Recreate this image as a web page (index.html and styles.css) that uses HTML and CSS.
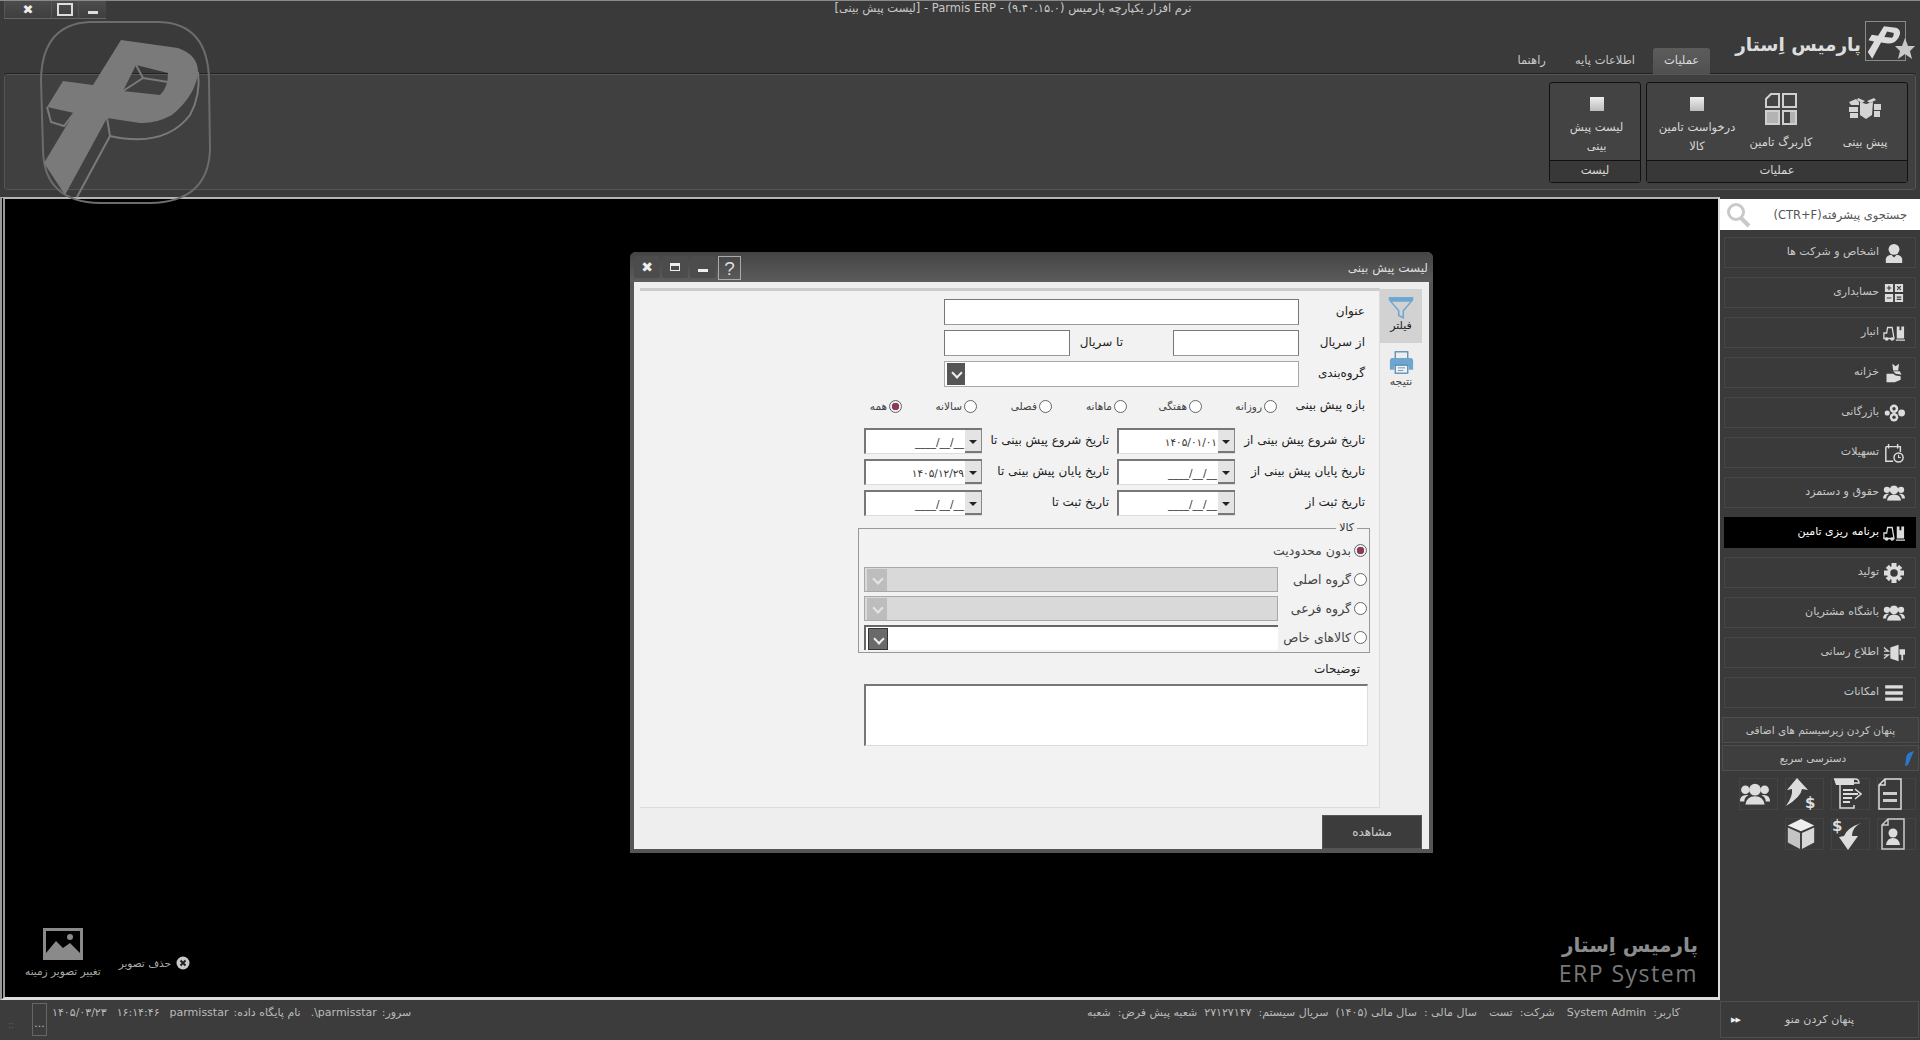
FILE: index.html
```html
<!DOCTYPE html>
<html lang="fa" dir="rtl">
<head>
    <meta charset="UTF-8">
    <title>Parmis ERP</title>
    <link rel="stylesheet" href="styles.css">
</head>
<body>
    <!-- نمادهای مشترک -->
    <svg class="symbols" xmlns="http://www.w3.org/2000/svg">
        <symbol id="p-mark" viewBox="40 20 172 186">
            <path fill-rule="evenodd" d="M121 40 L178 48 Q198 55 198 72 Q196 95 172 115 Q155 124 140 123 L107 118 L65 195 L44 163 L74 113 L47 107 L63 81 L93 85 Z M136 65 L123 91 L160 95 Q168 88 168 73 Z"/>
        </symbol>
        <symbol id="i-people" viewBox="0 0 28 20">
            <circle cx="5" cy="6" r="4"/><circle cx="23" cy="6" r="4"/>
            <path d="M0 17 Q0 11 6 11 L8 11 Q4 13 4 17Z M28 17 Q28 11 22 11 L20 11 Q24 13 24 17Z"/>
            <circle cx="14" cy="6" r="5.5"/>
            <path d="M5 20 Q6 12 14 12 Q22 12 23 20Z"/>
        </symbol>
        <symbol id="i-lift" viewBox="0 0 24 18">
            <path d="M1 15 V9 H4 L5 3 H10 L12 15 Z" fill="none" stroke="currentColor" stroke-width="1.4"/>
            <circle cx="4" cy="15.5" r="2"/><circle cx="10" cy="15.5" r="2"/>
            <path d="M14 16 H24 V17.5 H14Z"/>
            <path d="M15 2 H23 V15 H15Z M18 2 V6 H20 V2Z" fill-rule="evenodd"/>
        </symbol>
    </svg>

    <div class="top">
        <div class="titlebar">
            <div class="win-buttons">
                <span class="win-btn win-min"></span>
                <span class="win-btn win-max"></span>
                <span class="win-btn win-close">&#10006;</span>
            </div>
            <div class="win-title">نرم افزار یکپارچه پارمیس (۹.۴۰.۱۵.۰) - Parmis ERP - [لیست پیش بینی]</div>
        </div>

        <div class="tabs-row">
            <div class="brand">
                <svg class="brand-mark" viewBox="0 0 50 42">
                    <rect x="0.5" y="0.5" width="40" height="39" fill="none" stroke="#8a8a8a"/>
                    <use href="#p-mark" x="1" y="1" width="38" height="39" fill="#dcdcdc"/>
                    <path d="M40 17 L43 25 L50 25 L45 30 L47 38 L40 33 L33 38 L35 30 L30 25 L37 25Z" fill="#c8c8c8"/>
                </svg>
                <span class="brand-name">پارمیس اِستار</span>
            </div>
            <a class="tab active" href="#">عملیات</a>
            <a class="tab" href="#">اطلاعات پایه</a>
            <a class="tab" href="#">راهنما</a>
        </div>

        <div class="ribbon">
            <div class="ribbon-group group-wide">
                <div class="ribbon-body">
                    <div class="ribbon-item">
                        <svg class="ribbon-icon" width="34" height="32" viewBox="0 0 34 32">
                            <g fill="#d4d4d4">
                                <path d="M1 9 L8 6 L11 9 L11 12 L3 12Z M1 14 H10 V19 H1Z M2 20 H10 V25 H2Z"/>
                                <path d="M12 9 L18 11 L25 9 L24 22 L18 26 L12 22Z"/>
                                <path d="M10 5 L17 8 L14 10 L9 7Z M26 5 L19 8 L22 10 L28 7Z"/>
                                <path d="M26 11 H33 V17 H26Z M26 18 H32 V24 H26Z"/>
                            </g>
                        </svg>
                        <span>پیش بینی</span>
                    </div>
                    <div class="ribbon-item">
                        <svg class="ribbon-icon" width="34" height="32" viewBox="0 0 32 32">
                            <g fill="none" stroke="#cfcfcf" stroke-width="2">
                                <path d="M6 1 H14 V14 H1 V6 Z"/>
                                <rect x="18" y="1" width="13" height="13"/>
                                <rect x="1" y="18" width="13" height="13"/>
                                <rect x="18" y="18" width="13" height="13"/>
                            </g>
                            <path d="M1 19 H14 V31 H1Z M25 18 H31 V31 H25Z" fill="#cfcfcf" opacity=".8"/>
                        </svg>
                        <span>کاربرگ تامین</span>
                    </div>
                    <div class="ribbon-item two-line">
                        <span class="ribbon-square"></span>
                        <span>درخواست تامین<br>کالا</span>
                    </div>
                </div>
                <div class="ribbon-foot">عملیات</div>
            </div>
            <div class="ribbon-group group-narrow">
                <div class="ribbon-body">
                    <div class="ribbon-item two-line">
                        <span class="ribbon-square"></span>
                        <span>لیست پیش<br>بینی</span>
                    </div>
                </div>
                <div class="ribbon-foot">لیست</div>
            </div>
        </div>

        <!-- لوگوی کمرنگ روی نوار -->
        <svg class="ghost-logo" viewBox="40 20 172 186">
            <path d="M90 22 H160 Q208 24 209 80 L210 150 Q208 202 150 203 H100 Q44 202 43 150 L41 80 Q42 24 90 22Z" fill="none" stroke="#6c6c6c" stroke-width="2"/>
            <use href="#p-mark" x="40" y="20" width="172" height="186" fill="#7a7a7a"/>
            <path d="M198 72 Q201 95 190 115 Q165 148 110 136 L107 118 M110 136 L77 197 M47 107 L51 122 L64 126 L74 113 M136 65 L143 78 L123 91 M143 78 L168 82" fill="none" stroke="#7a7a7a" stroke-width="2"/>
        </svg>
    </div>

    <div class="workspace">
        <aside class="sidebar">
            <div class="search">
                <span class="search-text">جستجوی پیشرفته(CTR+F)</span>
                <svg width="26" height="26" viewBox="0 0 26 26">
                    <circle cx="10" cy="10" r="7.5" fill="none" stroke="#c9c9c9" stroke-width="3"/>
                    <path d="M15 16 L23 24" stroke="#c9c9c9" stroke-width="4"/>
                </svg>
            </div>

            <a class="side-item" href="#">
                <svg class="side-icon" viewBox="0 0 22 22"><circle cx="11" cy="7" r="6"/><path d="M2 22 V17 Q3 14 8 13 L11 16 L14 13 Q19 14 20 17 V22Z"/></svg>
                اشخاص و شرکت ها
            </a>
            <a class="side-item" href="#">
                <svg class="side-icon" viewBox="0 0 22 22">
                    <path d="M1 1 H10 V10 H1Z M12 1 H21 V10 H12Z M1 12 H10 V21 H1Z M12 12 H21 V21 H12Z"/>
                    <path d="M3 5.5 H8 M5.5 3 V8 M14.5 3.5 L18.5 7.5 M18.5 3.5 L14.5 7.5 M3 16.5 H8 M14 15.5 H19 M14 18 H19" stroke="#3a3a3a" stroke-width="1.3"/>
                </svg>
                حسابداری
            </a>
            <a class="side-item" href="#">
                <svg class="side-icon" viewBox="0 0 24 18"><use href="#i-lift"/></svg>
                انبار
            </a>
            <a class="side-item" href="#">
                <svg class="side-icon" viewBox="0 0 22 24">
                    <path d="M9 1 L13 4 L17 1 L16 9 H10Z"/>
                    <path d="M10 10 H18 L20 14 L13 13Z"/>
                    <path d="M2 13 H10 L13 15 L19 16 V20 L12 23 H2Z"/>
                </svg>
                خزانه
            </a>
            <a class="side-item" href="#">
                <svg class="side-icon" viewBox="0 0 26 22">
                    <circle cx="13" cy="6" r="5"/><circle cx="13" cy="16" r="5"/>
                    <circle cx="22" cy="11" r="4"/><circle cx="5" cy="11" r="3"/>
                    <circle cx="13" cy="6" r="2" fill="#3a3a3a"/><circle cx="13" cy="16" r="2" fill="#3a3a3a"/>
                </svg>
                بازرگانی
            </a>
            <a class="side-item" href="#">
                <svg class="side-icon" viewBox="0 0 22 22">
                    <path d="M2 4 H18 V10 M2 4 V20 H10 M2 4" fill="none" stroke="currentColor" stroke-width="1.6"/>
                    <path d="M5 1 V6 M15 1 V6" stroke="currentColor" stroke-width="1.6"/>
                    <circle cx="16" cy="16" r="5" fill="none" stroke="currentColor" stroke-width="1.6"/>
                    <path d="M16 13 V16 H18.5" fill="none" stroke="currentColor" stroke-width="1.2"/>
                </svg>
                تسهیلات
            </a>
            <a class="side-item" href="#">
                <svg class="side-icon" viewBox="0 0 28 20"><use href="#i-people"/></svg>
                حقوق و دستمزد
            </a>
            <a class="side-item selected" href="#">
                <svg class="side-icon" viewBox="0 0 24 18"><use href="#i-lift"/></svg>
                برنامه ریزی تامین
            </a>
            <a class="side-item" href="#">
                <svg class="side-icon" viewBox="0 0 24 24">
                    <circle cx="12" cy="12" r="6.5" fill="none" stroke="currentColor" stroke-width="4"/>
                    <path d="M9 0 H15 V6 H9Z M9 18 H15 V24 H9Z M0 9 H6 V15 H0Z M18 9 H24 V15 H18Z M2 6 L6 2 L9 6 L6 9Z M18 2 L22 6 L18 9 L15 6Z M2 18 L6 15 L9 18 L6 22Z M22 18 L18 22 L15 18 L18 15Z"/>
                </svg>
                تولید
            </a>
            <a class="side-item" href="#">
                <svg class="side-icon" viewBox="0 0 28 20"><use href="#i-people"/></svg>
                باشگاه مشتریان
            </a>
            <a class="side-item" href="#">
                <svg class="side-icon" viewBox="0 0 24 18">
                    <path d="M8 3 L17 0 V18 L8 15Z M18 5 H24 V11 H22 V17 H20 V11 H18Z"/>
                    <path d="M1 3 L6 7 L1 7 M1 15 L6 11 L1 11" fill="none" stroke="currentColor" stroke-width="1.3"/>
                </svg>
                اطلاع رسانی
            </a>
            <a class="side-item" href="#">
                <svg class="side-icon" viewBox="0 0 20 16"><path d="M2 1 H18 V4 H2Z M2 6.5 H18 V9.5 H2Z M2 12 H18 V15 H2Z"/></svg>
                امکانات
            </a>

            <div class="side-bar-btn">پنهان کردن زیرسیستم های اضافی</div>
            <div class="side-bar-btn quick-title">
                دسترسی سریع
                <svg class="feather" width="9" height="15" viewBox="0 0 9 15"><path d="M9 0 Q1 1 1 8 L0 15 L3 14 Q5 9 9 0Z" fill="#2a78c8"/></svg>
            </div>

            <div class="quick-grid">
                <div class="quick-box">
                    <svg width="24" height="32" viewBox="0 0 24 32">
                        <path d="M7 1 H23 V31 H1 V7Z M7 1 V7 H1" fill="none" stroke="#ddd" stroke-width="1.5"/>
                        <path d="M5 14 H19 V17 H5Z M5 21 H19 V24 H5Z" fill="#ccc"/>
                    </svg>
                </div>
                <div class="quick-box">
                    <svg width="30" height="32" viewBox="0 0 30 32">
                        <path d="M2 1 H23 Q27 1 27 5 H8 V30 H22 V27" fill="none" stroke="#ddd" stroke-width="1.5"/>
                        <path d="M2 1 H22 V7 H4Z" fill="#ddd"/>
                        <path d="M11 11 H21 V13 H11Z M11 15 H26 V17 H11Z M11 19 H20 V21 H11Z M11 23 H18 V25 H11Z" fill="#ddd"/>
                        <path d="M23 11 L29 16 L23 21" fill="none" stroke="#ddd" stroke-width="1.5"/>
                    </svg>
                </div>
                <div class="quick-box">
                    <svg width="30" height="32" viewBox="0 0 30 32">
                        <path d="M11 0 L22 12 L16 11 Q15 19 0 28 Q7 18 6 11 L1 12Z" fill="#ddd"/>
                        <text x="19" y="30" class="dollar">$</text>
                    </svg>
                </div>
                <div class="quick-box">
                    <svg width="30" height="22" viewBox="0 0 28 20" fill="#ddd"><use href="#i-people"/></svg>
                </div>
                <div class="quick-box quick-inset">
                    <svg width="24" height="32" viewBox="0 0 24 32">
                        <path d="M7 1 H23 V31 H1 V7Z M7 1 V7 H1" fill="none" stroke="#ccc" stroke-width="1.5"/>
                        <circle cx="12" cy="15" r="4.5" fill="#ddd"/>
                        <path d="M5 27 Q6 20 12 20 Q18 20 19 27Z" fill="#ddd"/>
                    </svg>
                </div>
                <div class="quick-box">
                    <svg width="30" height="32" viewBox="0 0 30 32">
                        <text x="0" y="13" class="dollar">$</text>
                        <path d="M29 5 Q20 9 20 18 L26 18 L16 32 L7 19 L12 18 Q15 10 29 5Z" fill="#ddd"/>
                    </svg>
                </div>
                <div class="quick-box">
                    <svg width="30" height="32" viewBox="0 0 30 34">
                        <path d="M15 1 L29 8 L15 14 L1 8Z" fill="#eee"/>
                        <path d="M1 10 L14 16 V33 L1 26Z" fill="#c4c4c4"/>
                        <path d="M29 10 L16 16 V33 L29 26Z" fill="#d8d8d8"/>
                    </svg>
                </div>
                <div class="quick-box empty"></div>
            </div>

            <div class="hide-menu">
                <span>پنهان کردن منو</span>
                <span class="hide-arrows">&#9654;&#9654;</span>
            </div>
        </aside>

        <div class="left-col">
            <main class="desktop">
                <!-- پنجره لیست پیش بینی -->
                <section class="dialog">
                    <div class="dialog-title">
                        <span>لیست پیش بینی</span>
                        <div class="dialog-buttons">
                            <span class="dlg-help">?</span>
                            <span class="dlg-btn"><i class="dlg-min"></i></span>
                            <span class="dlg-btn"><i class="dlg-max"></i></span>
                            <span class="dlg-btn dlg-close">&#10006;</span>
                        </div>
                    </div>

                    <div class="dialog-main">
                        <div class="side-tabs">
                            <div class="side-tab active">
                                <svg width="26" height="24" viewBox="0 0 34 30">
                                    <path d="M1 2 H33 V6 H1Z" fill="#6da7cf"/>
                                    <path d="M3 7 H31 L20 20 V29 L14 26 V20Z" fill="none" stroke="#6da7cf" stroke-width="2"/>
                                </svg>
                                فیلتر
                            </div>
                            <div class="side-tab">
                                <svg width="25" height="25" viewBox="0 0 28 28">
                                    <rect x="7" y="2" width="14" height="8" fill="none" stroke="#5a8fb4" stroke-width="1.5"/>
                                    <path d="M1 12 Q1 9 4 9 H24 Q27 9 27 12 V22 H22 V18 H6 V22 H1Z" fill="#6da7cf"/>
                                    <rect x="7" y="17" width="14" height="9" fill="#f2f2f2" stroke="#5a8fb4" stroke-width="1.5"/>
                                    <path d="M10 20 H18 M10 23 H16" stroke="#5a8fb4"/>
                                </svg>
                                نتیجه
                            </div>
                        </div>

                        <div class="panel">
                            <div class="row">
                                <label class="lbl lbl-main">عنوان</label>
                                <input class="field field-wide" type="text">
                            </div>
                            <div class="row">
                                <label class="lbl lbl-main">از سریال</label>
                                <input class="field field-short" type="text">
                                <label class="lbl lbl-serial">تا سریال</label>
                                <input class="field field-short" type="text">
                            </div>
                            <div class="row">
                                <label class="lbl lbl-main">گروه‌بندی</label>
                                <div class="combo field-wide"><span class="combo-btn"></span></div>
                            </div>

                            <div class="row row-period">
                                <label class="lbl lbl-period">بازه پیش بینی</label>
                                <label class="radio-item"><input type="radio" name="period">روزانه</label>
                                <label class="radio-item"><input type="radio" name="period">هفتگی</label>
                                <label class="radio-item"><input type="radio" name="period">ماهانه</label>
                                <label class="radio-item"><input type="radio" name="period">فصلی</label>
                                <label class="radio-item"><input type="radio" name="period">سالانه</label>
                                <label class="radio-item"><input type="radio" name="period" checked>همه</label>
                            </div>

                            <div class="row row-date-first">
                                <label class="lbl lbl-date">تاریخ شروع پیش بینی از</label>
                                <div class="date"><span class="date-btn"></span><span class="date-val">۱۴۰۵/۰۱/۰۱</span></div>
                                <label class="lbl lbl-date-to">تاریخ شروع پیش بینی تا</label>
                                <div class="date"><span class="date-btn"></span><span class="date-val">____/__/__</span></div>
                            </div>
                            <div class="row">
                                <label class="lbl lbl-date">تاریخ پایان پیش بینی از</label>
                                <div class="date"><span class="date-btn"></span><span class="date-val">____/__/__</span></div>
                                <label class="lbl lbl-date-to">تاریخ پایان پیش بینی تا</label>
                                <div class="date"><span class="date-btn"></span><span class="date-val">۱۴۰۵/۱۲/۲۹</span></div>
                            </div>
                            <div class="row">
                                <label class="lbl lbl-date">تاریخ ثبت از</label>
                                <div class="date"><span class="date-btn"></span><span class="date-val">____/__/__</span></div>
                                <label class="lbl lbl-date-to">تاریخ ثبت تا</label>
                                <div class="date"><span class="date-btn"></span><span class="date-val">____/__/__</span></div>
                            </div>

                            <fieldset class="goods">
                                <legend>کالا</legend>
                                <div class="goods-row goods-first">
                                    <label class="radio-item"><input type="radio" name="goods" checked>بدون محدودیت</label>
                                </div>
                                <div class="goods-row">
                                    <label class="radio-item"><input type="radio" name="goods">گروه اصلی</label>
                                    <div class="combo combo-off"><span class="combo-btn"></span></div>
                                </div>
                                <div class="goods-row">
                                    <label class="radio-item"><input type="radio" name="goods">گروه فرعی</label>
                                    <div class="combo combo-off"><span class="combo-btn"></span></div>
                                </div>
                                <div class="goods-row">
                                    <label class="radio-item"><input type="radio" name="goods">کالاهای خاص</label>
                                    <div class="combo combo-on"><span class="combo-btn"></span></div>
                                </div>
                            </fieldset>

                            <div class="notes-label">توضیحات</div>
                            <textarea class="notes"></textarea>
                        </div>
                    </div>

                    <div class="dialog-foot">
                        <button class="btn-view" type="button">مشاهده</button>
                    </div>
                </section>

                <div class="bg-tools">
                    <div class="bg-remove">
                        <svg width="14" height="14" viewBox="0 0 14 14">
                            <circle cx="7" cy="7" r="6.5" fill="#c8c8c8"/>
                            <path d="M4.5 4.5 L9.5 9.5 M9.5 4.5 L4.5 9.5" stroke="#222" stroke-width="2"/>
                        </svg>
                        حذف تصویر
                    </div>
                    <div class="bg-change">
                        <svg width="40" height="32" viewBox="0 0 40 32">
                            <path d="M0 0 H40 V32 H0Z M3 3 V25 L13 13 L20 20 L27 15 L37 25 V3Z" fill="#8a8a8a" fill-rule="evenodd"/>
                            <circle cx="27" cy="9" r="3" fill="#8a8a8a"/>
                            <path d="M3 29 L13 16 L19 23 L27 18 L37 29Z" fill="#8a8a8a"/>
                        </svg>
                        تغییر تصویر زمینه
                    </div>
                </div>

                <div class="watermark">
                    <div class="wm-name">پارمیس اِستار</div>
                    <div class="wm-erp" dir="ltr">ERP System</div>
                </div>
            </main>

            <footer class="statusbar">
                <div class="status-group status-right">
                    <span>کاربر:</span><span>System Admin</span>
                    <span class="sp">شرکت:</span><span>تست</span>
                    <span class="sp">سال مالی :</span><span>سال مالی (۱۴۰۵)</span>
                    <span>سریال سیستم:</span><span>۲۷۱۲۷۱۴۷</span>
                    <span>شعبه پیش فرض:</span><span>شعبه</span>
                </div>
                <div class="status-group status-left">
                    <span>سرور:</span><bdi dir="ltr">.\parmisstar</bdi>
                    <span class="sp">نام پایگاه داده:</span><span>parmisstar</span>
                    <span class="sp">۱۶:۱۴:۴۶</span>
                    <span class="sp">۱۴۰۵/۰۳/۲۳</span>
                    <span class="status-more">...</span>
                </div>
                <span class="grip">::</span>
            </footer>
        </div>
    </div>
</body>
</html>
```

FILE: styles.css
```css
* {
    box-sizing: border-box;
}

html, body {
    margin: 0;
    padding: 0;
    height: 1040px;
    overflow: hidden;
}

body {
    font-family: "DejaVu Sans", sans-serif;
    font-size: 12px;
    background-color: #3a3a3a;
    color: #ccc;
}

a {
    color: inherit;
    text-decoration: none;
}

.symbols {
    display: none;
}

/* نوار بالا */
.top {
    position: relative;
    height: 197px;
    border-top: 1px solid #8a8a8a;
}

.titlebar {
    display: flex;
    flex-direction: row-reverse;
    height: 18px;
}

.win-buttons {
    display: flex;
    flex-direction: row-reverse;
    width: 106px;
    height: 18px;
    direction: ltr;
    flex-shrink: 0;
}

.win-btn {
    display: flex;
    align-items: center;
    justify-content: center;
    height: 18px;
    background: linear-gradient(#4c4c4c, #3f3f3f);
    border-bottom: 1px solid #666;
    border-left: 1px solid #555;
    color: #eee;
    font-size: 13px;
}

.win-close {
    width: 47px;
}

.win-max {
    width: 27px;
}

.win-min {
    width: 28px;
}

.win-max::after {
    content: "";
    width: 12px;
    height: 9px;
    border: 2px solid #ddd;
}

.win-min::after {
    content: "";
    width: 10px;
    height: 3px;
    margin-top: 6px;
    background-color: #ddd;
}

.win-title {
    flex: 1;
    text-align: center;
    line-height: 15px;
    color: #c8c8c8;
    font-size: 11.5px;
    white-space: nowrap;
}

.tabs-row {
    display: flex;
    align-items: flex-end;
    height: 55px;
    padding-right: 5px;
}

.brand {
    display: flex;
    align-items: center;
    height: 48px;
    margin-bottom: 6px;
    margin-left: 25px;
    gap: 4px;
}

.brand-mark {
    width: 50px;
    height: 42px;
    margin-bottom: 4px;
}

.brand-name {
    font-size: 18.5px;
    font-weight: bold;
    color: #ddd;
    white-space: nowrap;
}

.tab {
    height: 26px;
    line-height: 24px;
    padding: 0 11px;
    margin-left: 7px;
    border-radius: 3px 3px 0 0;
    color: #c8c8c8;
    font-size: 11.5px;
}

.tab.active {
    background: linear-gradient(#5c5c5c, #505050);
    color: #ddd;
}

.ribbon {
    display: flex;
    gap: 5px;
    height: 116px;
    margin: 0 4px;
    padding: 7px 7px 6px;
    background-color: #404040;
    border: 1px solid #555;
    border-radius: 3px;
    box-shadow: 0 -1px 0 #222;
}

.ribbon-group {
    display: flex;
    flex-direction: column;
    height: 101px;
    background-color: #434343;
    border: 1px solid #111;
    border-radius: 3px;
}

.group-wide {
    width: 262px;
}

.group-narrow {
    width: 92px;
}

.group-wide .two-line {
    padding-left: 8px;
}

.group-narrow .two-line {
    padding-left: 3px;
}

.ribbon-body {
    display: flex;
    flex: 1;
}

.ribbon-item {
    flex: 1;
    display: flex;
    flex-direction: column;
    align-items: center;
    padding-top: 10px;
    text-align: center;
    color: #d8d8d8;
    font-size: 11.5px;
    line-height: 19px;
}

.ribbon-icon {
    margin-bottom: 8px;
}

.two-line {
    padding-top: 14px;
}

.ribbon-square {
    width: 14px;
    height: 14px;
    margin-bottom: 7px;
    background: linear-gradient(#eee, #bbb);
}

.ribbon-foot {
    height: 22px;
    line-height: 18px;
    text-align: center;
    background-color: #383838;
    border-top: 1px solid #111;
    color: #d8d8d8;
    font-size: 11.5px;
}

.ghost-logo {
    position: absolute;
    left: 40px;
    top: 19px;
    width: 172px;
    height: 186px;
    pointer-events: none;
    z-index: 2;
}

/* بدنه */
.workspace {
    display: flex;
    height: 843px;
}

.left-col {
    display: flex;
    flex-direction: column;
    flex: 1;
}

.sidebar {
    display: flex;
    flex-direction: column;
    width: 200px;
    padding-top: 2px;
    flex-shrink: 0;
}

.search {
    display: flex;
    align-items: center;
    justify-content: space-between;
    height: 31px;
    padding: 0 13px 0 6px;
    margin-bottom: 7px;
    background-color: #fff;
    color: #555;
    font-size: 11.5px;
}

.side-item {
    display: flex;
    align-items: center;
    gap: 4px;
    height: 31px;
    margin: 0 4px 9px;
    padding: 0 10px 2px 0;
    background-color: #3a3a3a;
    border: 1px solid #464646;
    color: #c8c8c8;
    font-size: 11px;
    white-space: nowrap;
}

.side-item.selected {
    background-color: #000;
    border-color: #000;
    color: #fff;
}

.side-icon {
    width: 22px;
    height: 20px;
    margin-top: 2px;
    fill: #dcdcdc;
    color: #dcdcdc;
    flex-shrink: 0;
}

.side-bar-btn {
    position: relative;
    height: 26px;
    line-height: 24px;
    margin: 0 1px 2px 2px;
    text-align: center;
    background-color: #3e3e3e;
    border: 1px solid #4e4e4e;
    color: #c8c8c8;
    font-size: 10.5px;
}

.quick-title {
    padding-right: 15px;
}

.feather {
    position: absolute;
    right: 4px;
    top: 5px;
}

.quick-grid {
    display: grid;
    grid-template-columns: repeat(4, 39px);
    grid-auto-rows: 32px;
    gap: 8px 7px;
    margin: 5px 4px 0 0;
}

.quick-box {
    display: flex;
    align-items: center;
    justify-content: flex-end;
    border: 1px solid #444;
}

.quick-inset {
    padding-left: 3px;
}

.quick-box.empty {
    border: none;
}

.dollar {
    direction: ltr;
    font-size: 15px;
    font-weight: bold;
    fill: #ddd;
}

.hide-menu {
    display: flex;
    align-items: center;
    justify-content: center;
    position: relative;
    height: 37px;
    margin: auto 1px 2px 0;
    border: 1px solid #4e4e4e;
    color: #c8c8c8;
    font-size: 11px;
}

.hide-arrows {
    position: absolute;
    left: 10px;
    font-size: 7px;
    letter-spacing: -1px;
    color: #eee;
}

/* ناحیه سیاه */
.desktop {
    position: relative;
    flex: 1;
    background-color: #000;
    border-top: 2px solid #b5b5b5;
    border-left: 5px double #999;
    border-right: 2px solid #ddd;
    border-bottom: 3px solid #ddd;
}

/* پنجره */
.dialog {
    position: absolute;
    left: 625px;
    top: 53px;
    width: 803px;
    height: 601px;
    display: flex;
    flex-direction: column;
    background-color: #eee;
    border: 4px solid #555;
    border-top: none;
    border-radius: 6px 6px 0 0;
    color: #222;
}

.dialog-title {
    display: flex;
    align-items: center;
    justify-content: space-between;
    height: 30px;
    margin: 0 -4px;
    padding: 2px 5px 0 4px;
    background: linear-gradient(#444, #5c5c5c);
    border-radius: 6px 6px 0 0;
    color: #ddd;
    font-size: 12px;
    flex-shrink: 0;
}

.dialog-buttons {
    display: flex;
    gap: 2px;
}

.dlg-btn {
    display: flex;
    align-items: center;
    justify-content: center;
    width: 26px;
    height: 22px;
    color: #eee;
    font-size: 14px;
    border-radius: 3px;
    background-color: #4c4c4c;
}

.dlg-max {
    display: block;
    width: 10px;
    height: 8px;
    border: 1px solid #eee;
    border-top-width: 3px;
}

.dlg-min {
    display: block;
    width: 10px;
    height: 3px;
    margin-top: 7px;
    background-color: #eee;
}

.dlg-help {
    width: 23px;
    height: 24px;
    text-align: center;
    line-height: 23px;
    border: 1px solid #aaa;
    color: #ddd;
    font-size: 19px;
    font-family: "Liberation Sans", sans-serif;
}

.dialog-main {
    display: flex;
    height: 526px;
    padding: 6px 7px 0 6px;
    flex-shrink: 0;
}

.side-tabs {
    width: 42px;
    flex-shrink: 0;
    margin-top: 1px;
}

.side-tab {
    display: flex;
    flex-direction: column;
    align-items: center;
    height: 54px;
    padding-top: 6px;
    margin-bottom: 1px;
    color: #444;
    font-size: 11px;
    line-height: 14px;
}

.side-tab.active {
    background-color: #d2d2d2;
    color: #222;
}

.panel {
    flex: 1;
    height: 520px;
    padding: 8px 9px 0 0;
    background-color: #f2f2f2;
    border-top: 3px solid #ccc;
    border-right: 1px solid #ddd;
    border-bottom: 1px solid #ddd;
}

.row {
    display: flex;
    align-items: center;
    height: 26px;
    margin-bottom: 5px;
    padding-right: 5px;
}

.row-period {
    margin-top: 6px;
    margin-bottom: 9px;
}

.lbl {
    padding-bottom: 3px;
    font-size: 12px;
    white-space: nowrap;
    color: #222;
}

.lbl-main {
    width: 66px;
}

.lbl-serial {
    width: 103px;
    padding-right: 50px;
}

.lbl-period {
    width: 88px;
}

.lbl-date {
    width: 130px;
}

.lbl-date-to {
    width: 135px;
    padding-right: 8px;
}

.field {
    height: 26px;
    padding: 0 4px;
    background-color: #fff;
    border: 1px solid #777;
    border-bottom-color: #999;
    outline: none;
}

.field-wide {
    width: 355px;
}

.field-short {
    width: 126px;
}

.combo {
    display: flex;
    align-items: center;
    height: 26px;
    padding: 0 2px;
    background-color: #fff;
    border: 1px solid #aaa;
}

.combo-btn {
    position: relative;
    width: 18px;
    height: 22px;
    margin-right: auto;
    background-color: #555;
}

.combo-btn::after {
    content: "";
    position: absolute;
    left: 6px;
    top: 6px;
    width: 6px;
    height: 6px;
    border-right: 2px solid #eee;
    border-bottom: 2px solid #eee;
    transform: rotate(45deg);
}

.combo-off {
    width: 414px;
    height: 25px;
    background-color: #d9d9d9;
    border-color: #a8a8a8;
}

.combo-off .combo-btn {
    width: 20px;
    background-color: #bdbdbd;
}

.combo-off .combo-btn::after {
    left: 7px;
    border-color: #e4e4e4;
}

.combo-on {
    width: 414px;
    height: 25px;
    border: none;
    border-top: 2px solid #666;
    border-left: 2px solid #666;
}

.combo-on .combo-btn {
    width: 20px;
    background-color: #6a6a6a;
    border: 1px solid #333;
}

.radio-item {
    display: flex;
    align-items: center;
    gap: 2px;
    width: 75px;
    font-size: 10.5px;
    color: #444;
    white-space: nowrap;
}

.radio-item input {
    appearance: none;
    width: 13px;
    height: 13px;
    margin: 0;
    background-color: #fff;
    border: 1px solid #666;
    border-radius: 50%;
    flex-shrink: 0;
}

.radio-item input:checked {
    background: radial-gradient(circle, #8a3a5a 0 3.5px, #eee 4px);
}

.date {
    display: flex;
    align-items: center;
    width: 118px;
    height: 26px;
    background-color: #fff;
    border-top: 2px solid #777;
    border-left: 2px solid #777;
    border-bottom: 1px solid #ddd;
}

.date-btn {
    position: relative;
    width: 17px;
    height: 100%;
    background-color: #e4e4e4;
    border-right: 1px solid #888;
    border-bottom: 2px solid #777;
    flex-shrink: 0;
}

.date-btn::after {
    content: "";
    position: absolute;
    left: 4px;
    top: 10px;
    border-left: 4px solid transparent;
    border-right: 4px solid transparent;
    border-top: 4px solid #222;
}

.date-val {
    padding-right: 1px;
    font-size: 10.5px;
    direction: ltr;
    color: #333;
}

.goods {
    width: 512px;
    height: 131px;
    margin: 6px 0 0;
    padding: 0 2px 0 4px;
    border: 1px solid #999;
    min-inline-size: auto;
}

.goods legend {
    margin-right: 10px;
    padding: 0 3px;
    font-size: 11px;
    line-height: 12px;
    color: #333;
}

.goods-row {
    display: flex;
    align-items: center;
    height: 25px;
    margin-bottom: 4px;
}

.goods-first {
    height: 20px;
    margin-top: 6px;
    margin-bottom: 7px;
}

.goods .radio-item {
    width: 89px;
    gap: 3px;
    flex-shrink: 0;
    font-size: 12.5px;
}

.notes-label {
    margin: 8px 10px 0 0;
    height: 23px;
    line-height: 16px;
    font-size: 12px;
    color: #222;
}

.notes {
    display: block;
    width: 504px;
    height: 62px;
    margin-right: 2px;
    background-color: #fff;
    border: 1px solid #ddd;
    border-top: 2px solid #777;
    border-left: 2px solid #777;
    resize: none;
    outline: none;
}

.dialog-foot {
    display: flex;
    padding: 7px 7px 0 0;
}

.btn-view {
    width: 100px;
    height: 34px;
    background-color: #3c3c3c;
    border: 1px solid #555;
    color: #ccc;
    font-family: inherit;
    font-size: 12px;
}

/* ابزار تصویر زمینه */
.bg-tools {
    position: absolute;
    left: 20px;
    bottom: 20px;
    display: flex;
    align-items: flex-end;
    gap: 18px;
    color: #aaa;
    font-size: 10.5px;
}

.bg-remove {
    display: flex;
    align-items: center;
    gap: 5px;
    margin-bottom: 7px;
}

.bg-change {
    display: flex;
    flex-direction: column;
    align-items: center;
    gap: 5px;
}

.watermark {
    position: absolute;
    right: 20px;
    bottom: 11px;
    text-align: right;
}

.wm-name {
    font-size: 20px;
    font-weight: bold;
    line-height: 30px;
    color: #8c8c8c;
    white-space: nowrap;
}

.wm-erp {
    font-family: "Open Sans", sans-serif;
    font-size: 23px;
    line-height: 26px;
    letter-spacing: 1.5px;
    color: #777;
}

/* نوار وضعیت */
.statusbar {
    position: relative;
    display: flex;
    justify-content: space-between;
    height: 40px;
    padding: 3px 40px 0 0;
    background-color: #3c3c3c;
    font-size: 11px;
    color: #bbb;
}

.status-group {
    display: flex;
    align-items: flex-start;
    line-height: 20px;
    white-space: nowrap;
}

.status-right {
    gap: 7px;
}

.status-left {
    gap: 5px;
    margin-left: 32px;
}

.sp {
    margin-right: 5px;
}

.status-more {
    width: 15px;
    height: 33px;
    line-height: 40px;
    text-align: center;
    border: 1px solid #666;
}

.grip {
    position: absolute;
    left: 8px;
    top: 20px;
    font-size: 9px;
    color: #666;
}
```
